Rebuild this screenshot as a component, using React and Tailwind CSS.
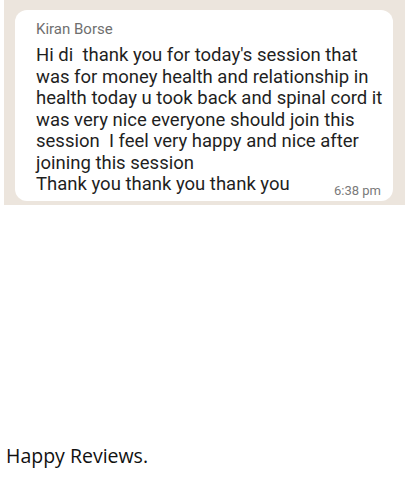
export default function App() {
    return (
        <div className="w-[405px] h-[483px] bg-white overflow-hidden">
            <div className="ml-[4px] h-[205px] bg-[#ece5dd] pt-[10px] pl-[11px] pr-[12px]">
                <div className="h-[191px] rounded-[12px] bg-white pl-[21px] pr-[10px] pt-[9px]"
                    style={{ fontFamily: 'Roboto, "Liberation Sans", sans-serif' }}>
                    <div className="text-[15px] leading-[20px] text-[#6f6f6f]">Kiran Borse</div>
                    <div className="mt-[6px] text-[18.5px] leading-[21.5px] text-[#1f1f1f] whitespace-pre">
                        {"Hi di  thank you for today's session that\nwas for money health and relationship in\nhealth today u took back and spinal cord it\nwas very nice everyone should join this\nsession  I feel very happy and nice after\njoining this session"}
                    </div>
                    <div className="flex items-end justify-between">
                        <span className="text-[18.5px] leading-[21.5px] text-[#1f1f1f]">Thank you thank you thank you</span>
                        <span className="text-[13px] leading-[16px] text-[#7a7a7a] mr-[2px] mb-[-3px]">6:38 pm</span>
                    </div>
                </div>
            </div>
            <p className="mt-[238px] ml-[6px] text-[19.5px] leading-[26px] text-[#111]"
                style={{ fontFamily: '"Open Sans", "Noto Sans", sans-serif' }}>
                Happy Reviews.
            </p>
        </div>
    )
}
